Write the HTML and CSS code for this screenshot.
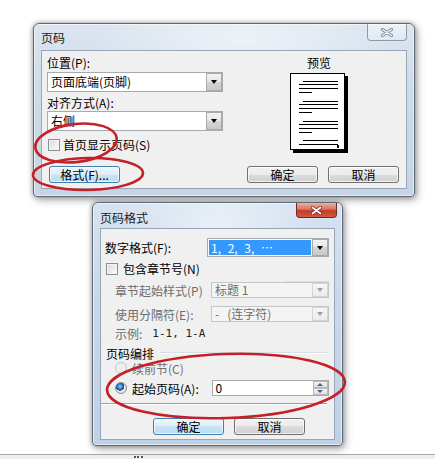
FILE: index.html
```html
<!DOCTYPE html>
<html lang="zh-CN">

<head>
    <meta charset="UTF-8">
    <title>页码</title>
    <link rel="stylesheet" href="styles.css">
</head>

<body>
    <div class="desktop">
        <!-- 页码 dialog (inactive) -->
        <div class="window win-page">
            <div class="titlebar">
                <span class="title">页码</span>
                <span class="close inactive">
                    <svg width="12" height="9" viewBox="0 0 12 9">
                        <path d="M1.5 1.5L10.5 7.5M10.5 1.5L1.5 7.5" stroke="#7c8796" stroke-width="3.2" stroke-linecap="round" />
                        <path d="M1.5 1.5L10.5 7.5M10.5 1.5L1.5 7.5" stroke="#f4f6f8" stroke-width="1.4" stroke-linecap="round" />
                    </svg>
                </span>
            </div>
            <div class="client client-page">
                <div class="top">
                    <div class="fields">
                        <div class="field-label">位置(P):</div>
                        <div class="combo combo-pos"><span class="value">页面底端(页脚)</span><span class="drop"></span></div>
                        <div class="field-label label-align">对齐方式(A):</div>
                        <div class="combo"><span class="value">右侧</span><span class="drop"></span></div>
                        <div class="check-row">
                            <span class="checkbox"></span>
                            <span>首页显示页码(S)</span>
                        </div>
                    </div>
                    <div class="preview">
                        <div class="field-label preview-label">预览</div>
                        <svg class="page-pic" width="58" height="80" viewBox="0 0 58 80">
                            <rect x="3" y="3" width="55" height="77" fill="#000" />
                            <rect x="0.5" y="0.5" width="54" height="76" fill="#fff" stroke="#000" />
                            <path stroke="#000" stroke-width="1" d="M13 8.5H48M9 11.5H48M9 15.5H48M9 19.5H22
                                M13 28.5H48M9 31.5H48M9 35.5H48M9 39.5H22
                                M13 48.5H48M9 51.5H48M9 55.5H48M9 59.5H22
                                M13 67.5H48M9 71.5H48" />
                            <rect x="47" y="72" width="2" height="3" fill="#000" />
                        </svg>
                    </div>
                </div>
                <div class="buttons">
                    <button class="btn focus">格式(F)...</button>
                    <span class="spacer"></span>
                    <button class="btn">确定</button>
                    <button class="btn">取消</button>
                </div>
            </div>
        </div>

        <!-- 页码格式 dialog (active) -->
        <div class="window win-format">
            <div class="titlebar">
                <span class="title">页码格式</span>
                <span class="close active">
                    <svg width="11" height="9" viewBox="0 0 11 9">
                        <path d="M1.5 1.5L9.5 7.5M9.5 1.5L1.5 7.5" stroke="#6b2119" stroke-width="3.2" stroke-linecap="round" />
                        <path d="M1.5 1.5L9.5 7.5M9.5 1.5L1.5 7.5" stroke="#ffffff" stroke-width="1.8" stroke-linecap="round" />
                    </svg>
                </span>
            </div>
            <div class="client client-format">
                <div class="row row-number">
                    <span>数字格式(F):</span>
                    <div class="combo combo-wide"><span class="value selected">1, 2, 3, …</span><span class="drop"></span></div>
                </div>
                <div class="check-row row-chapter">
                    <span class="checkbox"></span>
                    <span>包含章节号(N)</span>
                    <span class="group-line"></span>
                </div>
                <div class="row row-sub row-style disabled">
                    <span>章节起始样式(P)</span>
                    <div class="combo combo-sub"><span class="value">标题 1</span><span class="drop"></span></div>
                </div>
                <div class="row row-sub row-sep disabled">
                    <span>使用分隔符(E):</span>
                    <div class="combo combo-sub"><span class="value">-&nbsp;&nbsp;&nbsp;(连字符)</span><span class="drop"></span></div>
                </div>
                <div class="row row-sub row-example">
                    <span class="muted">示例:</span>
                    <span class="example">1-1, 1-A</span>
                </div>
                <div class="group-title">
                    <span>页码编排</span>
                    <span class="group-line"></span>
                </div>
                <div class="radio-row radio-continue disabled">
                    <span class="radio"></span>
                    <span>续前节(C)</span>
                </div>
                <div class="radio-row radio-start">
                    <span class="radio checked"></span>
                    <span class="radio-text">起始页码(A):</span>
                    <div class="spin">
                        <span class="value">0</span>
                        <span class="spin-buttons">
                            <span class="spin-up"></span>
                            <span class="spin-down"></span>
                        </span>
                    </div>
                </div>
                <div class="separator"></div>
                <div class="buttons buttons-format">
                    <button class="btn focus">确定</button>
                    <button class="btn">取消</button>
                </div>
            </div>
        </div>

        <!-- red marks drawn over the screenshot -->
        <svg class="marks" width="435" height="454" viewBox="0 0 435 454">
            <g fill="none" stroke="#c42028" stroke-width="2.6">
                <ellipse cx="76" cy="143" rx="41" ry="19" transform="rotate(-7 76 143)" />
                <ellipse cx="88" cy="174" rx="55" ry="16" transform="rotate(-1 88 174)" />
                <ellipse cx="226" cy="386" rx="119" ry="32" transform="rotate(-2 226 386)" />
            </g>
        </svg>
    </div>
    <div class="strip"><span class="dots"></span></div>
</body>

</html>
```

FILE: styles.css
```css
* {
    box-sizing: border-box;
}

html,
body {
    margin: 0;
}

body {
    width: 435px;
    height: 459px;
    overflow: hidden;
    display: flex;
    flex-direction: column;
    background: #fff;
    font-family: "Noto Sans CJK SC", "Liberation Sans", sans-serif;
    font-size: 12px;
    color: #000;
}

.desktop {
    position: relative;
    height: 454px;
    flex-shrink: 0;
}

.strip {
    flex: 1;
    border-top: 1px solid #a7a7a7;
    background: #efefef;
    padding-left: 134px;
}

.dots {
    display: block;
    width: 9px;
    margin-top: 1px;
    border-top: 2px dotted #555;
}

/* windows */
.window {
    position: absolute;
    display: flex;
    flex-direction: column;
    border: 1px solid #5d6977;
    border-radius: 6px 6px 4px 4px;
    background:
        radial-gradient(ellipse 60% 40% at 55% 10%, rgba(255, 255, 255, 0.55), rgba(255, 255, 255, 0) 70%),
        linear-gradient(to bottom, #dbe5f0, #cddae8 40%, #c6d4e4);
    box-shadow:
        inset 0 0 0 1px rgba(255, 255, 255, 0.6),
        0 0 5px rgba(0, 0, 0, 0.35),
        2px 3px 8px rgba(0, 0, 0, 0.3);
}

.win-page {
    left: 33px;
    top: 23px;
    width: 382px;
    height: 174px;
}

.win-format {
    left: 92px;
    top: 202px;
    width: 251px;
    height: 244px;
    background:
        radial-gradient(ellipse 60% 40% at 50% 10%, rgba(255, 255, 255, 0.5), rgba(255, 255, 255, 0) 70%),
        linear-gradient(to bottom, #d6e2f0, #c8d8ea 40%, #bfd1e6);
}

.titlebar {
    height: 26px;
    display: flex;
    justify-content: space-between;
    align-items: flex-start;
    padding: 0 7px;
    flex-shrink: 0;
}

.win-format .titlebar {
    height: 25px;
    padding-right: 5px;
}

.title {
    margin-top: 6px;
    line-height: 16px;
    color: #1b1b1b;
}

.win-format .title {
    margin-top: 7px;
}

.close {
    display: flex;
    align-items: center;
    justify-content: center;
    border-radius: 0 0 4px 4px;
}

.close.inactive {
    width: 40px;
    height: 17px;
    border: 1px solid #8e9aaa;
    border-top: none;
    background: linear-gradient(to bottom, rgba(255, 255, 255, 0.5), rgba(255, 255, 255, 0.15));
}

.close.active {
    width: 41px;
    height: 15px;
    border: 1px solid #6e2a22;
    border-top: none;
    background: linear-gradient(to bottom, #e9b2a6, #d8715f 45%, #c43b27 55%, #cf5a3e);
}

.client {
    flex: 1;
    margin: 0 7px 7px;
    border: 1px solid #98a7b9;
    background: #f0f0f0;
}

.win-format .client {
    margin-bottom: 5px;
}

/* page number dialog */
.client-page {
    padding: 4px 7px 0 5px;
    display: flex;
    flex-direction: column;
}

.top {
    display: flex;
}

.fields {
    width: 176px;
    display: flex;
    flex-direction: column;
}

.field-label {
    height: 16px;
    line-height: 16px;
}

.combo-pos {
    margin-top: 1px;
}

.label-align {
    margin-top: 3px;
}

.combo {
    height: 20px;
    display: flex;
    border: 1px solid #a6abb3;
    background: #fff;
}

.combo .value {
    flex: 1;
    padding-left: 3px;
    line-height: 18px;
    white-space: nowrap;
}

.combo .drop {
    width: 16px;
    border: 1px solid #a9a9a9;
    background: linear-gradient(to bottom, #f3f3f3, #e6e6e6 50%, #d4d4d4 50%, #c9c9c9);
    position: relative;
}

.combo .drop::after {
    content: "";
    position: absolute;
    left: 4px;
    top: 50%;
    margin-top: -2px;
    border-left: 3.5px solid transparent;
    border-right: 3.5px solid transparent;
    border-top: 4px solid #000;
}

.check-row {
    display: flex;
    align-items: center;
    gap: 3px;
    height: 15px;
    margin-top: 6px;
    padding-left: 1px;
}

.checkbox {
    width: 12px;
    height: 12px;
    border: 1px solid #8e8f8f;
    background: linear-gradient(to bottom right, #dcdcdc, #fbfbfb);
    box-shadow: inset 0 0 0 1px #f4f4f4;
    flex-shrink: 0;
}

.preview {
    margin-left: 67px;
    width: 58px;
    display: flex;
    flex-direction: column;
}

.preview-label {
    text-align: center;
}

.page-pic {
    display: block;
    margin-top: 2px;
}

.buttons {
    display: flex;
    align-items: center;
    gap: 10px;
    margin-top: 13px;
    padding-left: 2px;
}

.spacer {
    flex: 1;
}

.btn {
    width: 71px;
    height: 17px;
    padding: 0;
    border: 1px solid #707070;
    border-radius: 3px;
    background: linear-gradient(to bottom, #f2f2f2, #ebebeb 50%, #dddddd 50%, #cfcfcf);
    box-shadow: inset 0 0 0 1px rgba(255, 255, 255, 0.7);
    font-family: inherit;
    font-size: 12px;
    line-height: 15px;
    color: #000;
}

.btn.focus {
    border-color: #3c7fb1;
    background: linear-gradient(to bottom, #eef7fd, #dcedf9 50%, #c8e3f6 50%, #bddcf2);
}

/* page number format dialog */
.client-format {
    padding: 9px 5px 0 0;
    display: flex;
    flex-direction: column;
}

.row {
    display: flex;
    align-items: center;
    justify-content: space-between;
    height: 19px;
    padding-left: 4px;
    white-space: nowrap;
}

.combo-wide {
    width: 122px;
    height: 19px;
}

.combo-wide .value {
    line-height: 15px;
}

.value.selected {
    flex: 1;
    margin: 1px;
    background: #3399ff;
    color: #fff;
    padding-left: 2px;
    word-spacing: 4px;
}

.row-chapter {
    height: 13px;
    margin-top: 5px;
    padding-left: 5px;
    gap: 5px;
}

.group-line {
    flex: 1;
    height: 2px;
    border-top: 1px solid #d5dfe5;
    border-bottom: 1px solid #fff;
    margin-left: 6px;
}

.row-chapter .group-line {
    margin-left: 80px;
    align-self: flex-end;
    margin-bottom: -8px;
}

.row-sub {
    padding-left: 14px;
    height: 16px;
}

.row-style {
    margin-top: 7px;
}

.row-sep {
    margin-top: 8px;
}

.combo-sub {
    width: 118px;
    height: 16px;
}

.combo-sub .value {
    line-height: 14px;
}

.disabled {
    color: #6d6d6d;
}

.disabled .combo {
    border-color: #c2c5ca;
    background: #f4f4f4;
}

.disabled .combo .drop {
    border-color: #d5d5d5;
    background: linear-gradient(to bottom, #f6f6f6, #ececec);
}

.disabled .combo .drop::after {
    border-top-color: #a0a0a0;
}

.row-example {
    margin-top: 3px;
    justify-content: flex-start;
}

.muted {
    color: #6d6d6d;
}

.example {
    margin-left: 10px;
    font-family: "DejaVu Sans Mono", monospace;
    font-size: 11px;
    color: #222;
}

.group-title {
    display: flex;
    align-items: center;
    height: 16px;
    margin-top: 4px;
    padding-left: 5px;
}

.radio-row {
    display: flex;
    align-items: center;
    gap: 5px;
    padding-left: 14px;
}

.radio-continue {
    height: 14px;
}

.radio-start {
    height: 16px;
    margin-top: 5px;
}

.radio {
    width: 12px;
    height: 12px;
    border-radius: 50%;
    border: 1px solid #8e8f8f;
    background: radial-gradient(circle at 40% 35%, #fbfbfb, #d8d8d8);
    flex-shrink: 0;
}

.disabled .radio {
    border-color: #c7c7c7;
    background: #eeeeee;
}

.radio.checked {
    background:
        radial-gradient(circle at 40% 35%, #9fd4ff 0, #2b78c8 2.5px, #12498a 4px, rgba(0, 0, 0, 0) 4.2px),
        radial-gradient(circle at 40% 35%, #fbfbfb, #d8d8d8);
}

.radio-text {
    width: 75px;
}

.spin {
    width: 118px;
    height: 16px;
    display: flex;
    border: 1px solid #a6abb3;
    background: #fff;
}

.spin .value {
    flex: 1;
    padding-left: 3px;
    line-height: 14px;
}

.spin-buttons {
    width: 15px;
    display: flex;
    flex-direction: column;
}

.spin-up,
.spin-down {
    flex: 1;
    position: relative;
    border: 1px solid #b5b9bf;
    background: linear-gradient(to bottom, #f5f5f5, #dedede);
}

.spin-up::after,
.spin-down::after {
    content: "";
    position: absolute;
    left: 3px;
    top: 1px;
    border-left: 3.5px solid transparent;
    border-right: 3.5px solid transparent;
}

.spin-up::after {
    border-bottom: 3px solid #4d6185;
}

.spin-down::after {
    border-top: 3px solid #4d6185;
}

.separator {
    height: 2px;
    margin-top: 7px;
    margin-right: 2px;
    border-top: 1px solid #a0a0a0;
    border-bottom: 1px solid #fff;
}

.buttons-format {
    margin-top: 13px;
    padding-left: 52px;
}

/* annotation overlay */
.marks {
    position: absolute;
    left: 0;
    top: 0;
    pointer-events: none;
}
```
